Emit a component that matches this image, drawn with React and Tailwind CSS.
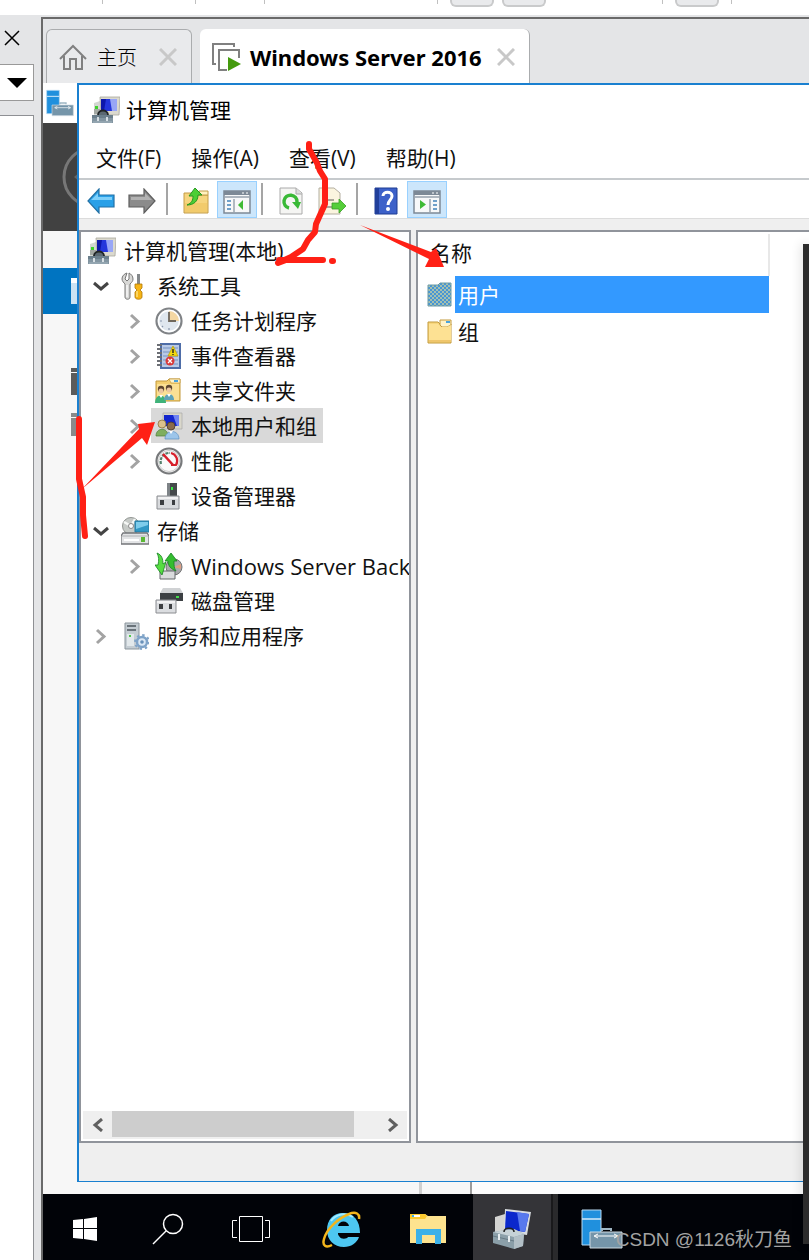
import React, { useState } from 'react'

const Computer = ({ className = 'w-7 h-7' }) => (
  <svg viewBox="0 0 28 28" className={className}>
    <path d="M2 7l6-2v14H2z" fill="#d3d6d2" />
    <path d="M2 13h6v5H2z" fill="#a4a9a4" />
    <rect x="3" y="10" width="3" height="3" fill="#3fd12c" />
    <path d="M8 1h20l-1 18H9z" fill="#dbd9ce" stroke="#a8a79d" strokeWidth=".8" />
    <path d="M9 3h16v12H9z" fill="#2436dc" />
    <path d="M18 3h7v12h-5z" fill="#98a6f6" />
    <path d="M9 3h5l-2 12H9z" fill="#0d17ab" />
    <path d="M6 19c0-6 10-6 10 0z" fill="#5b6972" />
    <path d="M6 19c0-6 10-6 10 0" fill="none" stroke="#202426" strokeWidth="1.8" />
    <path d="M0 19h21v8H0z" fill="#8295a1" />
    <path d="M0 19h21v3H0z" fill="#6b7f8c" />
    <path d="M1 25h19v2H1z" fill="#93a5b0" />
    <path d="M6 21v4M15 21v4" stroke="#dfe6ea" strokeWidth="1.8" />
  </svg>
)

const Tools = () => (
  <svg viewBox="0 0 28 28" className="w-7 h-7">
    <path d="M6 1c-3 1-5 3-5 6 0 2 2 4 3 5v13c0 3 5 3 5 0V12c2-2 3-3 3-5 0-3-2-5-4-6v6L6 9 4 7z" fill="#d8d8d6" stroke="#777" />
    <path d="M6 13v12" stroke="#f7f7f7" strokeWidth="1.500" />
    <path d="M16 2h3v11h-3z" fill="#84888b" />
    <path d="M14 12h7v4l-2 2 2 2v5c0 3-7 3-7 0v-5l2-2-2-2z" fill="#f6b516" stroke="#ae7607" strokeWidth=".8" />
    <path d="M16 19v6" stroke="#ffe07a" strokeWidth="1.500" />
  </svg>
)

const Clock = () => (
  <svg viewBox="0 0 28 28" className="w-7 h-7">
    <circle cx="14" cy="14" r="12.5" fill="#dfe7ef" stroke="#808386" strokeWidth="2.2" />
    <circle cx="14" cy="14" r="10.5" fill="none" stroke="#fff" strokeWidth="1.400" />
    <path d="M14 4a10 10 0 0 1 10 10H14z" fill="#f4d7a2" />
    <path d="M14 5v9h7" fill="none" stroke="#6e675c" strokeWidth="1.8" />
    <path d="M14 21v2M5 14h2M7 20l1-1" stroke="#8896ab" strokeWidth="1.200" />
  </svg>
)

const EventLog = () => (
  <svg viewBox="0 0 28 28" className="w-7 h-7">
    <path d="M5 1h21v26H5z" fill="#4e6da8" />
    <path d="M7 3h17v22H7z" fill="#b9cae6" />
    <path d="M8 6h15M8 10h15M8 14h15M8 18h15M8 22h15" stroke="#7793c4" />
    <path d="M2 3h5M2 7h5M2 11h5M2 15h5M2 19h5M2 23h5" stroke="#6c6f75" strokeWidth="1.8" />
    <path d="M18 4l5 10H13z" fill="#f5d90e" stroke="#b59c0a" strokeWidth=".7" />
    <path d="M18 7v4M18 12v1" stroke="#222" strokeWidth="1.4" />
    <circle cx="15" cy="19" r="4.5" fill="#d83a3a" />
    <path d="M13 17l4 4M17 17l-4 4" stroke="#fff" strokeWidth="1.3" />
  </svg>
)

const Folder = () => (
  <svg viewBox="0 0 28 28" className="w-7 h-7">
    <path d="M2 4h10l2 2h11v19H2z" fill="#f7d67d" stroke="#c39a3d" />
    <path d="M14 2h11v5l-4 2h-5l-2-2z" fill="#fff3c8" stroke="#c39a3d" />
    <path d="M20 3h4v2h-4z" fill="#4aa3dc" />
    <path d="M3 6h9l3 3h6l4-2v16H3z" fill="#fde193" />
    <path d="M3 22h22v2H3z" fill="#efc66c" />
  </svg>
)

const SelectedFolder = () => (
  <svg viewBox="0 0 28 28" className="w-7 h-7">
    <defs>
      <pattern id="dots" width="4" height="4" patternUnits="userSpaceOnUse">
        <rect width="4" height="4" fill="#a5c0b0" />
        <rect width="2" height="2" fill="#4796d4" />
        <rect x="2" y="2" width="2" height="2" fill="#4796d4" />
      </pattern>
    </defs>
    <path d="M2 4h10l2-2h11v23H2z" fill="url(#dots)" stroke="#6d9aa5" />
  </svg>
)

const People = () => (
  <>
    <circle cx="7" cy="12" r="4" fill="#dcc08c" stroke="#8b7440" strokeWidth=".8" />
    <path d="M1 24c0-9 12-9 12 0z" fill="#7fae5f" stroke="#4d7b3a" strokeWidth=".7" />
    <circle cx="16" cy="14" r="4" fill="#8b6b4b" stroke="#4b382b" strokeWidth=".8" />
    <path d="M10 27c0-10 14-10 14 0z" fill="#9cc5ea" stroke="#5c8fc0" strokeWidth=".7" />
    <path d="M14 19l2 3 2-3z" fill="#fff" />
  </>
)

const SharedFolder = () => (
  <svg viewBox="0 0 28 28" className="w-7 h-7">
    <path d="M1 4h11l2-2h11v22H1z" fill="#f3cf70" stroke="#c39a3d" />
    <path d="M14 2h11v4H16z" fill="#fff3c8" stroke="#c39a3d" strokeWidth=".7" />
    <path d="M2 7h22v16H2z" fill="#fbe094" />
    <path d="M19 3h4v2h-4z" fill="#4aa3dc" />
    <circle cx="6" cy="12" r="3.200" fill="#5d4630" />
    <circle cx="6" cy="14" r="2.500" fill="#ecc7a0" />
    <path d="M0 26c0-10 11-10 11 0z" fill="#3fb37a" />
    <path d="M4 18l2 3 2-3z" fill="#fff" />
    <circle cx="14" cy="11" r="3.200" fill="#5d4630" />
    <circle cx="14" cy="13" r="2.500" fill="#ecc7a0" />
    <path d="M9 23c0-8 10-8 10 0z" fill="#5fa3b9" />
    <path d="M12 17l2 3 2-3z" fill="#fff" />
  </svg>
)

const Users = () => (
  <svg viewBox="0 0 28 28" className="w-7 h-7">
    <path d="M8 1h19v16H8z" fill="#d9d7cb" stroke="#aaa" strokeWidth=".7" />
    <path d="M9 3h15v11H9z" fill="#1426cd" />
    <path d="M18 3h6v11h-2z" fill="#6f83f2" />
    <People />
  </svg>
)

const Gauge = () => (
  <svg viewBox="0 0 28 28" className="w-7 h-7">
    <circle cx="14" cy="14" r="12.500" fill="#fafafa" stroke="#77797b" strokeWidth="2.200" />
    <circle cx="14" cy="14" r="10.500" fill="none" stroke="#ccc" />
    <path d="M6 17a8.500 8.500 0 0 1 9-11" fill="none" stroke="#53816c" strokeWidth="2.200" strokeDasharray="3 1" />
    <path d="M16 6a8 8 0 0 1 5 12h-5" fill="none" stroke="#d7202b" strokeWidth="2.200" />
    <path d="M8 7l10 11" stroke="#d7202b" strokeWidth="2.600" />
  </svg>
)

const Device = () => (
  <svg viewBox="0 0 28 28" className="w-7 h-7">
    <path d="M12 1h10v13H12z" fill="#45494b" />
    <path d="M12 1h3v13h-3z" fill="#7e8387" />
    <rect x="16" y="5" width="2" height="3" fill="#3bea45" />
    <path d="M2 14h22v13H2z" fill="#d8dadd" stroke="#8b8d91" />
    <path d="M3 15h20v2H3z" fill="#f2f2f3" />
    <path d="M5 18h4v5H5zM17 18h3v5h-3z" fill="#3c3e41" />
  </svg>
)

const Storage = () => (
  <svg viewBox="0 0 28 28" className="w-7 h-7">
    <circle cx="10" cy="9" r="8.500" fill="#c6cac7" stroke="#929693" />
    <path d="M10 9L3 5M10 9l4-7" stroke="#f5f7f5" strokeWidth="2.500" />
    <circle cx="10" cy="9" r="2.500" fill="#fff" stroke="#888" />
    <path d="M14 4h14v11H14z" fill="#3098c5" stroke="#24799f" />
    <path d="M15 5h12v3l-12 4z" fill="#7dcceb" />
    <path d="M2 16h24l2 3v8H0v-8z" fill="#e3e4e6" stroke="#747679" strokeWidth="1.300" />
    <path d="M1 19h26" stroke="#aeb0b2" />
    <path d="M3 23h15" stroke="#fff" strokeWidth="2" />
    <rect x="20" y="20" width="4" height="5" fill="#5bb735" />
  </svg>
)

const Backup = () => (
  <svg viewBox="0 0 28 28" className="w-7 h-7">
    <circle cx="19" cy="15" r="8" fill="#a9a8ac" stroke="#747474" />
    <path d="M19 15l7-3v5z" fill="#df9f84" />
    <path d="M5 19h15v8H5z" fill="#dadbdd" stroke="#65696b" />
    <path d="M2 1c5 2 6 6 6 11l3-2-4 13-7-10h3C4 8 4 5 2 1z" fill="#57dd43" stroke="#178222" strokeWidth=".8" />
    <path d="M16 1l6 8h-3c0 5 0 7 2 10-5-2-8-5-8-10h-3z" fill="#35bd30" stroke="#178222" strokeWidth=".8" />
  </svg>
)

const Disk = () => (
  <svg viewBox="0 0 28 28" className="w-7 h-7">
    <path d="M8 1h17l3 5H5z" fill="#d0d2d4" />
    <path d="M5 6h23v8H5z" fill="#3c4043" />
    <rect x="21" y="9" width="3" height="2" fill="#45dc4d" />
    <path d="M1 13h20v13H1z" fill="#dbdde0" stroke="#8b8d91" />
    <path d="M2 14h18v2H2z" fill="#f2f2f3" />
    <path d="M4 17h4v5H4zM14 17h3v5h-3z" fill="#3c3e41" />
  </svg>
)

const Services = () => (
  <svg viewBox="0 0 28 28" className="w-7 h-7">
    <path d="M4 1h14v26H4z" fill="#c4ccd2" stroke="#8b959c" />
    <path d="M6 4h9M6 8h9" stroke="#4c565d" strokeWidth="1.500" />
    <path d="M6 12h7v12H6z" fill="#e2e8eb" />
    <rect x="8" y="13" width="2" height="2" fill="#51c84a" />
    <circle cx="21" cy="20" r="5" fill="#dbe8f5" stroke="#7fa3c8" strokeWidth="2.500" />
    <circle cx="21" cy="20" r="7" fill="none" stroke="#7fa3c8" strokeWidth="2" strokeDasharray="2.400 3.100" />
    <circle cx="21" cy="20" r="1.800" fill="#6890b9" />
  </svg>
)

const Arrow = ({ forward }) => (
  <svg viewBox="0 0 28 26" className="w-7 h-[26px]">
    <path
      d={forward ? 'M27 13L16 1v6H1v12h15v6z' : 'M1 13L12 1v6h15v12H12v6z'}
      fill={forward ? '#8b8b8b' : '#29a0e8'}
      stroke={forward ? '#5e5e5e' : '#2371a5'}
      strokeWidth="1.200"
    />
    <path d={forward ? 'M3 9h14V5l7 7H3z' : 'M4 12l7-7v4h14v3z'} fill={forward ? '#b2b2b2' : '#7ed0fa'} />
  </svg>
)

const FolderUp = () => (
  <svg viewBox="0 0 28 28" className="w-7 h-7">
    <path d="M2 6h9l2 2h13v18H2z" fill="#f6d57f" stroke="#c49c48" />
    <path d="M17 4h9v4h-9z" fill="#fff1bf" stroke="#c49c48" />
    <path d="M3 16h22v9H3z" fill="#f2cb6c" />
    <path d="M5 18c5-2 6-5 6-9H7l6-8 7 7h-4c0 6-4 10-11 10z" fill="#4cce35" stroke="#259820" />
  </svg>
)

const Panel = ({ right }) => (
  <svg viewBox="0 0 28 26" className="w-7 h-[26px]">
    <path d="M1 3h26v22H1z" fill="#f7f8f9" stroke="#7d8996" strokeWidth="1.500" />
    <path d="M1 3h26v4H1z" fill="#7d8996" />
    <path d="M2 9h24" stroke="#aeb6bf" strokeWidth="2" />
    <path d="M19 5h2M23 5h2" stroke="#fff" />
    {right ? (
      <>
        <path d="M17 11v14" stroke="#9aa4ae" strokeWidth="1.500" />
        <path d="M7 12v9l6-4.500z" fill="#3fba35" />
        <path d="M20 13h4M20 17h4M20 21h4" stroke="#4383b9" strokeWidth="1.700" />
      </>
    ) : (
      <>
        <path d="M11 11v14" stroke="#9aa4ae" strokeWidth="1.500" />
        <path d="M20 12v10l-5-5z" fill="#3fba35" />
        <path d="M4 13h4M4 17h4M4 21h4" stroke="#4383b9" strokeWidth="1.700" />
      </>
    )}
  </svg>
)

const Refresh = () => (
  <svg viewBox="0 0 24 28" className="w-6 h-7">
    <path d="M1 1h16l6 5v21H1z" fill="#f5f5f3" stroke="#aaa" />
    <path d="M17 1v6h6" fill="#ddd" stroke="#aaa" />
    <path d="M10 21a6.500 6.500 0 1 1 8-6" fill="none" stroke="#39b936" strokeWidth="3.500" />
    <path d="M13 15h9l-3 7z" fill="#39b936" />
  </svg>
)

const Export = () => (
  <svg viewBox="0 0 28 28" className="w-7 h-7">
    <path d="M1 1h15l6 5v21H1z" fill="#fbf5df" stroke="#b3aea0" />
    <path d="M4 8h5M4 13h12M4 20h12" stroke="#938d84" strokeWidth="1.500" />
    <path d="M14 16h7v-4l7 7-7 7v-4h-7z" fill="#55ce39" stroke="#389e26" strokeWidth=".8" />
  </svg>
)

const Help = () => (
  <svg viewBox="0 0 24 28" className="w-6 h-7">
    <path d="M1 1h22v26H1z" fill="#3d61c9" stroke="#1f3c92" />
    <path d="M1 1h4v26H1z" fill="#213f9b" />
    <path d="M9 9c0-5 9-5 9 0 0 4-4 4-4 9" fill="none" stroke="#fff" strokeWidth="3" />
    <circle cx="14" cy="22" r="2" fill="#fff" />
  </svg>
)

const ServerManager = ({ className }) => (
  <svg viewBox="0 0 42 40" className={className}>
    <path d="M1 1h19v35H1z" fill="#2090dd" stroke="#b8daf2" />
    <path d="M1 10h19" stroke="#d5ebf9" strokeWidth="1.500" />
    <path d="M21 22v-2h9v2" fill="none" stroke="#9fb6c4" strokeWidth="2" />
    <path d="M9 23h32v16H9z" fill="#7595a9" stroke="#cfdae1" />
    <path d="M14 27h22" stroke="#fff" />
    <path d="M17 25l-4 2 4 2M33 25l4 2-4 2" fill="none" stroke="#fff" />
  </svg>
)

const Chevron = ({ open }) => (
  <svg viewBox="0 0 20 20" className="w-5 h-5">
    <path
      d={open ? 'M4 7l7 6 7-6' : 'M7 4l7 6.500L7 17'}
      fill="none"
      stroke={open ? '#444' : '#a3a3a3'}
      strokeWidth="3"
    />
  </svg>
)

const tree = [
  { text: '计算机管理(本地)', level: 0, icon: <Computer /> },
  { text: '系统工具', level: 1, icon: <Tools />, arrow: 'open' },
  { text: '任务计划程序', level: 2, icon: <Clock />, arrow: 'closed' },
  { text: '事件查看器', level: 2, icon: <EventLog />, arrow: 'closed' },
  { text: '共享文件夹', level: 2, icon: <SharedFolder />, arrow: 'closed' },
  { text: '本地用户和组', level: 2, icon: <Users />, arrow: 'closed' },
  { text: '性能', level: 2, icon: <Gauge />, arrow: 'closed' },
  { text: '设备管理器', level: 2, icon: <Device /> },
  { text: '存储', level: 1, icon: <Storage />, arrow: 'open' },
  { text: 'Windows Server Back', level: 2, icon: <Backup />, arrow: 'closed', latin: true },
  { text: '磁盘管理', level: 2, icon: <Disk /> },
  { text: '服务和应用程序', level: 1, icon: <Services />, arrow: 'closed' },
]

const indents = ['pl-[3px]', 'pl-[9px]', 'pl-[43px]']

const TopBar = () => (
  <header className="h-[15px] shrink-0 bg-white flex items-start overflow-hidden">
    <div className="ml-[102px] w-px h-1 bg-[#c0c0c0]" />
    <div className="ml-[92px] w-px h-1 bg-[#c0c0c0]" />
    <div className="ml-[68px] w-px h-1 bg-[#c0c0c0]" />
    <div className="ml-[172px] w-px h-1 bg-[#c0c0c0]" />
    <button aria-label="view" className="ml-3 w-11 h-[7px] rounded-b-md border-2 border-t-0 border-[#c9cacb] bg-[#e9eaec]" />
    <button aria-label="layout" className="ml-2 w-11 h-[7px] rounded-b-md border-2 border-t-0 border-[#c9cacb] bg-[#e9eaec]" />
    <div className="ml-[116px] w-px h-1 bg-[#c0c0c0]" />
    <button aria-label="screen" className="ml-3 w-11 h-[7px] rounded-b-md border-2 border-t-0 border-[#c9cacb] bg-[#e9eaec]" />
    <div className="ml-3 w-px h-1 bg-[#c0c0c0]" />
  </header>
)

const Sidebar = () => (
  <aside className="w-[41px] shrink-0 flex flex-col">
    <button aria-label="close" className="h-[49px] pl-1 pb-1 flex items-center">
      <svg viewBox="0 0 16 16" className="w-4 h-4">
        <path d="M1 1l14 14M15 1L1 15" stroke="#000" strokeWidth="1.500" />
      </svg>
    </button>
    <button aria-label="list" className="w-[34px] h-[37px] bg-white border border-l-0 border-[#999] flex items-center justify-center">
      <svg viewBox="0 0 20 10" className="w-5 h-2.5">
        <path d="M0 0h20L10 10z" />
      </svg>
    </button>
    <div className="mt-3.5 flex-1 w-[34px] bg-white border border-l-0 border-b-0 border-[#8e9094]" />
  </aside>
)

const CloseMark = () => (
  <svg viewBox="0 0 18 18" className="w-[18px] h-[18px]">
    <path d="M1 1l16 16M17 1L1 17" stroke="#c8c8c8" strokeWidth="3" />
  </svg>
)

const Tabs = () => (
  <nav className="h-16 shrink-0 flex items-end pl-[3px]">
    <div className="w-[146px] h-[54px] flex items-center pl-3 border border-b-0 border-[#aaacae] rounded-t-md bg-[#e9eaec]">
      <svg viewBox="0 0 28 26" className="w-7 h-[26px]">
        <path d="M1 15L14 2l13 13M5 12v13h6V15h6v10h6V12" fill="none" stroke="#808080" strokeWidth="2" />
      </svg>
      <button className="ml-2.5 text-[20px] font-light font-['Noto_Sans_CJK_SC',sans-serif]">主页</button>
      <button aria-label="close" className="ml-[22px]"><CloseMark /></button>
    </div>
    <div className="ml-2 w-[330px] h-[54px] flex items-center pl-3 pt-0.5 border-r border-[#aaacae] rounded-t-md bg-white">
      <svg viewBox="0 0 30 28" className="w-[30px] h-7">
        <path d="M4 21H1V1h21v3" fill="none" stroke="#808080" strokeWidth="2" />
        <path d="M15 27H7V7h20v8" fill="none" stroke="#808080" strokeWidth="2" />
        <path d="M16 14v14l13-7z" fill="#459b0e" />
      </svg>
      <button className="ml-2 text-[22px] leading-7 font-bold whitespace-nowrap font-['Noto_Sans',sans-serif]">Windows Server 2016</button>
      <button aria-label="close" className="ml-auto mr-3.5"><CloseMark /></button>
    </div>
  </nav>
)

const Backdrop = () => (
  <div className="w-[34px] shrink-0 flex flex-col overflow-hidden">
    <div className="h-10 bg-white pl-[3px] pt-1.5">
      <ServerManager className="w-7 h-7" />
    </div>
    <div className="h-[108px] bg-[#414141] pt-[22px]">
      <svg viewBox="0 0 34 64" className="w-[34px] h-16">
        <circle cx="50" cy="32" r="29" fill="none" stroke="#777" strokeWidth="3" />
        <path d="M31 32l10-8v16z" fill="#666" />
      </svg>
    </div>
    <div className="mt-[37px] h-[46px] bg-[#0074c1] flex justify-end items-center">
      <div className="w-1.5 h-[26px] bg-[#cce3f3] border-t-[5px] border-white" />
    </div>
    <div className="mt-[54px] self-end w-1.5 h-1 bg-[#5b5b5b]" />
    <div className="mt-px self-end w-1.5 h-[22px] bg-[#5b5b5b]" />
    <div className="mt-[18px] self-end w-1.5 h-1 bg-[#8a8a8a]" />
    <div className="mt-px self-end w-1.5 h-[18px] bg-[#8a8a8a]" />
  </div>
)

const Separator = () => <div className="ml-1 mr-2 w-0.5 h-8 bg-[#a5a5a5]" />

const ToolButton = ({ label, active, children }) => (
  <button
    aria-label={label}
    className={`w-10 h-[37px] flex items-center justify-center pt-1 ${active ? 'bg-[#cce6fb] border border-[#99d1ff]' : ''}`}
  >
    {children}
  </button>
)

const Toolbar = () => (
  <div className="h-[39px] shrink-0 flex items-center pl-0.5 border-b border-[#dcdcdc] bg-white">
    <div className="flex gap-px">
      <ToolButton label="back"><Arrow /></ToolButton>
      <ToolButton label="forward"><Arrow forward /></ToolButton>
    </div>
    <Separator />
    <div className="flex gap-px">
      <ToolButton label="up"><FolderUp /></ToolButton>
      <ToolButton label="tree" active><Panel /></ToolButton>
    </div>
    <Separator />
    <div className="flex gap-px">
      <ToolButton label="refresh"><Refresh /></ToolButton>
      <ToolButton label="export"><Export /></ToolButton>
    </div>
    <Separator />
    <div className="flex gap-px">
      <ToolButton label="help"><Help /></ToolButton>
      <ToolButton label="actions" active><Panel right /></ToolButton>
    </div>
  </div>
)

const TreePane = ({ selected, onSelect }) => (
  <section className="w-[332px] shrink-0 flex flex-col bg-white border-2 border-[#90949b] overflow-hidden">
    <ul className="flex-1 pt-px">
      {tree.map(item => (
        <li key={item.text} className={`h-[35px] flex items-center ${indents[item.level]}`}>
          {item.level > 0 && (
            <span className="w-[27px] shrink-0">{item.arrow && <Chevron open={item.arrow === 'open'} />}</span>
          )}
          <button
            onClick={() => onSelect(item.text)}
            className={`h-[35px] flex items-center gap-2 pl-1 pr-1.5 whitespace-nowrap ${item.latin ? 'text-[22px]' : ''} ${selected === item.text ? 'bg-[#d9d9d9]' : ''}`}
          >
            {item.icon}
            {item.text}
          </button>
        </li>
      ))}
    </ul>
    <div className="h-7 mx-0.5 mb-0.5 flex bg-[#efefef]">
      <button aria-label="left" className="w-[29px] flex items-center justify-center">
        <svg viewBox="0 0 12 14" className="w-3 h-3.5">
          <path d="M10 1L3 7l7 6" fill="none" stroke="#606060" strokeWidth="3" />
        </svg>
      </button>
      <div className="w-[242px] h-[26px] bg-[#cdcdcd]" />
      <button aria-label="right" className="ml-auto w-[29px] flex items-center justify-center">
        <svg viewBox="0 0 12 14" className="w-3 h-3.5">
          <path d="M2 1l7 6-7 6" fill="none" stroke="#606060" strokeWidth="3" />
        </svg>
      </button>
    </div>
  </section>
)

const ListPane = () => (
  <section className="ml-[5px] flex-1 bg-white border-2 border-r-0 border-[#90949b] pt-0.5">
    <table className="w-[352px] border-collapse text-left">
      <thead>
        <tr className="h-[42px]">
          <th className="font-normal pl-3 pb-1 border-r-2 border-[#e8e8e8]">名称</th>
        </tr>
      </thead>
      <tbody>
        <tr className="h-[37px]">
          <td className="p-0">
            <div className="flex items-center pl-2">
              <SelectedFolder />
              <span className="ml-px flex-1 h-[37px] pl-[3px] flex items-center bg-[#3399ff] text-white">用户</span>
            </div>
          </td>
        </tr>
        <tr className="h-[37px]">
          <td className="p-0">
            <div className="flex items-center pl-2">
              <Folder />
              <span className="ml-px flex-1 h-[37px] pl-[3px] flex items-center">组</span>
            </div>
          </td>
        </tr>
      </tbody>
    </table>
  </section>
)

const ManagementWindow = () => {
  const [selected, setSelected] = useState('本地用户和组')

  return (
    <main className="flex-1 min-w-0 flex flex-col bg-[#efefef] border-l-2 border-t-2 border-b border-[#1a80d0] text-[21px] leading-7 text-[#111]">
      <div className="h-[50px] shrink-0 flex items-center gap-1.5 pl-[13px] bg-white text-black">
        <Computer />
        <h1>计算机管理</h1>
      </div>
      <div className="h-[45px] shrink-0 flex items-center pl-0.5 pt-0.5 bg-white border-b-2 border-[#c6cacd]">
        {['文件(F)', '操作(A)', '查看(V)', '帮助(H)'].map(name => (
          <button key={name} className="px-[15px]">{name}</button>
        ))}
      </div>
      <Toolbar />
      <div className="flex-1 flex pt-[11px]">
        <TreePane selected={selected} onSelect={setSelected} />
        <ListPane />
      </div>
      <div className="h-[38px] shrink-0" />
    </main>
  )
}

const Taskbar = () => (
  <footer className="h-[66px] shrink-0 flex bg-[#010308]">
    <button aria-label="start" className="w-[83px] flex items-center justify-center pt-1">
      <svg viewBox="0 0 24 24" className="w-6 h-6" fill="#fff">
        <path d="M0 3l10-1v9H0zM11 2l13-2v11H11zM0 12h10v10L0 21zM11 12h13v12l-13-2z" />
      </svg>
    </button>
    <button aria-label="search" className="w-[83px] flex items-center justify-center pt-1">
      <svg viewBox="0 0 32 32" className="w-8 h-8" fill="none" stroke="#fff" strokeWidth="1.500">
        <circle cx="21" cy="11" r="9.500" />
        <path d="M14 18L1 31" />
      </svg>
    </button>
    <button aria-label="tasks" className="w-[83px] flex items-center justify-center pt-1">
      <svg viewBox="0 0 38 26" className="w-[38px] h-[26px]" fill="none" stroke="#fff">
        <path d="M7.500 .5h23v25h-23zM5 4.500H.5v17H5M33 4.500h4.500v17H33" />
      </svg>
    </button>
    <button aria-label="browser" className="ml-[5px] w-[87px] flex items-center justify-center pt-1">
      <svg viewBox="0 0 40 38" className="w-10 h-[38px]">
        <path
          d="M22 3C12 3 6 10 6 20s7 17 17 17c7 0 13-4 15-10H27c-1 2-7 3-9-1-1-1-1-2-1-3h22C39 11 33 3 22 3zm-5 13c1-6 10-6 11 0z"
          fill="#4dc7f1"
        />
        <path d="M10 11c5-7 15-9 22-4" fill="none" stroke="#a4ebff" strokeWidth="2" />
        <path d="M38 9c1-5-3-8-10-5C18 8 6 18 3 29c-2 7 2 9 8 6" fill="none" stroke="#f3b51c" strokeWidth="2.500" />
      </svg>
    </button>
    <button aria-label="files" className="w-[87px] flex items-center justify-center pt-1">
      <svg viewBox="0 0 38 32" className="w-[38px] h-8">
        <path d="M1 1h15l3 2h18v27H1z" fill="#fde38f" />
        <path d="M1 1h15l2 2-2 3H1z" fill="#fbc92e" />
        <path d="M3 2h8v2H3z" fill="#fff" />
        <path d="M3 2h2v2H3z" fill="#3bb2ea" />
        <path d="M7 16h25v15h-6v-9H13v9H7z" fill="#3cb1e8" />
      </svg>
    </button>
    <button aria-label="computer management" className="ml-0.5 w-[78px] flex items-center justify-center pt-1 bg-[#343438]">
      <svg viewBox="0 0 40 42" className="w-10 h-[42px]">
        <path d="M3 9l10-3v19H3z" fill="#d4d4d2" />
        <path d="M13 1l26 3-4 23-23-3z" fill="#d8dce0" />
        <path d="M14 3l23 3-4 18-20-3z" fill="#0b28cc" />
        <path d="M25 4l12 2-4 18-5-1z" fill="#5879ed" />
        <path d="M1 24l21-3 10 5-1 12-9 3-21-6z" fill="#8b9fa9" />
        <path d="M1 24l21-3 10 5-10 3z" fill="#c6d2d7" />
        <path d="M1 28l21 5 10-4" fill="none" stroke="#677b86" />
        <path d="M22 29v12l9-3 1-12z" fill="#b2bfc6" />
        <path d="M12 24c0-5 10-5 10 0" fill="none" stroke="#222" strokeWidth="1.500" />
        <path d="M7 26v6M17 28v6" stroke="#e7edf0" strokeWidth="2" />
      </svg>
    </button>
    <div className="w-[7px] bg-[#2a2a2c] border-l-2 border-[#19191b]" />
    <button aria-label="server manager" className="w-[87px] flex items-center justify-center pt-1">
      <ServerManager className="w-[42px] h-10" />
    </button>
  </footer>
)

const Marks = () => (
  <svg viewBox="0 0 460 560" className="absolute top-0 left-0 w-[460px] h-[560px] pointer-events-none">
    <g fill="none" stroke="#ff2015" strokeLinecap="round" strokeLinejoin="round" strokeWidth="6">
      <path d="M309 144v5l8 14 3 8 5 8v25l-9 20-1 8-7 8-5 9-12 8-13 6 8-3M279 260h44M332 261h1" />
      <path d="M79 419v60l4 18v18l2 21" />
    </g>
    <path d="M360 225l71 27 5-4 8 19-19 0 4-8z" fill="#ff2015" />
    <path d="M82 489l57-60-1-5 17-2-8 23-5-7z" fill="#ff2015" />
  </svg>
)

const App = () => {
  return (
    <div className="relative min-h-screen flex flex-col overflow-hidden bg-[#e4e5e7] font-['Open_Sans','Noto_Sans_CJK_SC',sans-serif]">
      <TopBar />
      <div className="flex-1 flex">
        <Sidebar />
        <div className="mt-0.5 flex-1 min-w-0 flex flex-col border-l-2 border-t-2 border-[#6a6a6a]">
          <Tabs />
          <div className="flex-1 flex bg-[#f7f7f7]">
            <Backdrop />
            <div className="flex-1 min-w-0 flex flex-col">
              <ManagementWindow />
              <div className="h-3 shrink-0 flex pl-[342px]">
                <div className="w-[3px] bg-[#d0d0d0]" />
                <div className="ml-12 flex-1 bg-[#fcfcfc] border-l-2 border-[#9b9b9b]" />
              </div>
            </div>
          </div>
          <Taskbar />
        </div>
      </div>
      <div className="absolute right-0 top-[244px] bottom-4 w-1.5 bg-[#2c2c2c] shadow-[0_0_12px_rgba(0,0,0,0.2)]" />
      <p className="absolute right-[17px] bottom-1.5 text-[19px] leading-7 text-[#a3a3a3] font-['Liberation_Sans','Noto_Sans_CJK_SC',sans-serif]">
        CSDN @1126秋刀鱼
      </p>
      <Marks />
    </div>
  )
}

export default App
